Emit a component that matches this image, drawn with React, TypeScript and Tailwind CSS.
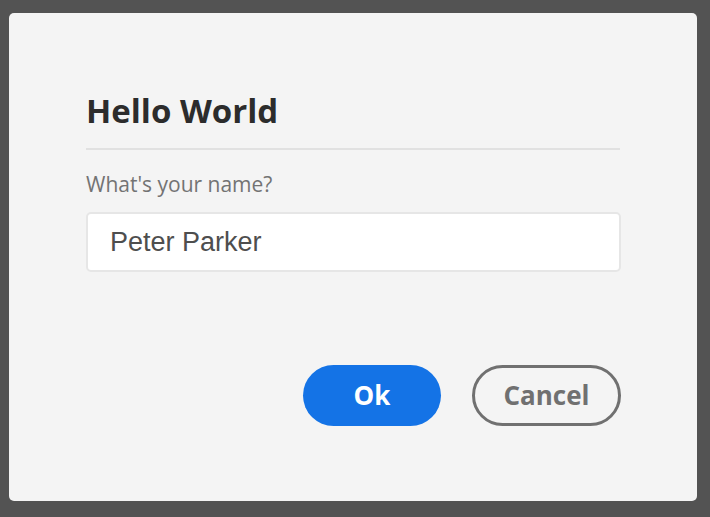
import React, { useState } from 'react';

const App: React.FC = () => {
  const [name, setName] = useState<string>('Peter Parker');

  return (
    <div className="w-[710px] h-[517px] bg-[#535353] pt-[13px] pl-[9px] pr-[13px] pb-[16px]">
      <div className="h-full bg-[#f4f4f4] rounded-[5px] pl-[77px] pr-[76px] pt-[76px] font-['Open_Sans',sans-serif]">
        <h1 className="text-[33px] leading-[44px] font-bold text-[#2c2c2c] pb-[15px] border-b-2 border-[#e1e1e1] mr-[1px]">
          Hello World
        </h1>
        <div className="mt-[20px] text-[21px] leading-[28px] text-[#737373]">What's your name?</div>
        <input
          className="mt-[14px] w-full h-[60px] bg-white border-2 border-[#e6e6e6] rounded-[5px] px-[22px] text-[27px] text-[#4e4e4e] font-['Liberation_Sans',Arial,sans-serif] outline-none"
          value={name}
          onChange={(e) => setName(e.target.value)}
        />
        <div className="flex justify-end gap-[31px] mt-[93px]">
          <button className="w-[138px] h-[61px] rounded-full bg-[#1473e6] text-white text-[26px] font-bold">
            Ok
          </button>
          <button className="w-[149px] h-[61px] rounded-full border-[3px] border-[#707070] text-[#707070] text-[26px] font-bold">
            Cancel
          </button>
        </div>
      </div>
    </div>
  );
};

export default App;
